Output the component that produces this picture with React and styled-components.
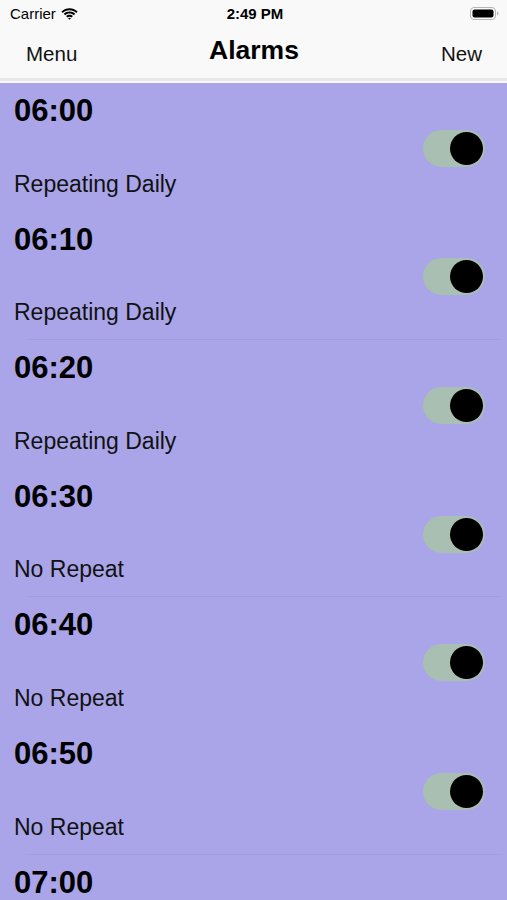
import React, { useState } from 'react';
import styled, { createGlobalStyle } from 'styled-components';

const GlobalStyle = createGlobalStyle`
  html, body {
    margin: 0;
    padding: 0;
    background: #a9a5e8;
    font-family: "Liberation Sans", Arial, sans-serif;
  }
  * { box-sizing: border-box; }
`;

const alarms = [
  { time: '06:00', repeat: 'Repeating Daily', sep: false },
  { time: '06:10', repeat: 'Repeating Daily', sep: true },
  { time: '06:20', repeat: 'Repeating Daily', sep: false },
  { time: '06:30', repeat: 'No Repeat', sep: true },
  { time: '06:40', repeat: 'No Repeat', sep: false },
  { time: '06:50', repeat: 'No Repeat', sep: true },
  { time: '07:00', repeat: 'No Repeat', sep: false },
];

function App() {
  const [on, setOn] = useState(alarms.map(() => true));

  return (
    <Page>
      <GlobalStyle />
      <Header>
        <StatusBar>
          <Carrier>
            Carrier
            <svg width="17" height="12" viewBox="0 0 17 12">
              <path d="M8.5 2.2c2.6 0 5 1 6.8 2.7l1.3-1.4C14.4 1.4 11.6.2 8.5.2S2.6 1.4.4 3.5l1.3 1.4C3.5 3.2 5.9 2.2 8.5 2.2z" fill="#000" />
              <path d="M8.5 5.5c1.7 0 3.2.6 4.4 1.7l1.3-1.4C12.7 4.4 10.7 3.5 8.5 3.5S4.3 4.4 2.8 5.8l1.3 1.4c1.2-1.1 2.7-1.7 4.4-1.7z" fill="#000" />
              <path d="M8.5 8.7c.8 0 1.5.3 2.1.8l1.3-1.4C11 7.3 9.8 6.8 8.5 6.8S6 7.3 5.1 8.1l1.3 1.4c.6-.5 1.3-.8 2.1-.8zM8.5 11.8l1.5-1.6c-.4-.3-.9-.5-1.5-.5s-1.1.2-1.5.5z" fill="#000" />
            </svg>
          </Carrier>
          <Clock>2:49 PM</Clock>
          <Battery>
            <svg width="30" height="13" viewBox="0 0 30 13">
              <rect x="0.5" y="0.5" width="25" height="12" rx="3.5" fill="none" stroke="#b5b5b5" />
              <rect x="2.5" y="2.5" width="21" height="8" rx="2" fill="#000" />
              <path d="M27 4.5v4c.9-.3 1.5-1.1 1.5-2s-.6-1.7-1.5-2z" fill="#b5b5b5" />
            </svg>
          </Battery>
        </StatusBar>
        <NavBar>
          <NavButton>Menu</NavButton>
          <Title>Alarms</Title>
          <NavButton $right>New</NavButton>
        </NavBar>
      </Header>

      <List>
        {alarms.map((a, i) => (
          <Row key={a.time} $sep={a.sep}>
            <Info>
              <Time>{a.time}</Time>
              <Repeat>{a.repeat}</Repeat>
            </Info>
            <Toggle
              $on={on[i]}
              onClick={() => setOn(on.map((v, j) => (j === i ? !v : v)))}
            >
              <Knob />
            </Toggle>
          </Row>
        ))}
      </List>
    </Page>
  );
}

export default App;

const Page = styled.div`
  width: 507px;
  height: 900px;
  overflow: hidden;
`;

const Header = styled.div`
  background: #f9f9f9;
  padding-bottom: 2px;
`;

const StatusBar = styled.div`
  height: 27px;
  display: flex;
  align-items: center;
  justify-content: space-between;
  padding: 0 7px 0 10px;
  font-size: 15px;
  color: #000;
`;

const Carrier = styled.div`
  display: flex;
  align-items: center;
  gap: 5px;
  width: 100px;
`;

const Clock = styled.div`
  font-weight: bold;
  font-size: 15px;
`;

const Battery = styled.div`
  width: 100px;
  display: flex;
  justify-content: flex-end;
`;

const NavBar = styled.div`
  height: 54px;
  display: flex;
  align-items: center;
  justify-content: space-between;
  padding: 2px 25px 0 26px;
  border-bottom: 3px solid #e8e8e8;
`;

const NavButton = styled.div`
  width: 80px;
  font-size: 20.5px;
  color: #111;
  text-align: ${p => (p.$right ? 'right' : 'left')};
`;

const Title = styled.div`
  font-size: 26.5px;
  font-weight: bold;
  color: #000;
  margin-bottom: 6px;
`;

const List = styled.div`
  background: #a9a5e8;
`;

const Row = styled.div`
  height: 128.6px;
  display: flex;
  align-items: center;
  justify-content: space-between;
  padding: 0 22px 0 14px;
  position: relative;
  &::after {
    content: '';
    display: ${p => (p.$sep ? 'block' : 'none')};
    position: absolute;
    left: 27px;
    right: 6px;
    bottom: 0;
    height: 1px;
    background: #a29ddc;
  }
`;

const Info = styled.div`
  height: 100%;
  display: flex;
  flex-direction: column;
  justify-content: space-between;
  padding: 10px 0 14px;
`;

const Time = styled.div`
  font-size: 31px;
  font-weight: bold;
  line-height: 36px;
  color: #000;
`;

const Repeat = styled.div`
  font-size: 23px;
  line-height: 28px;
  color: #111;
`;

const Toggle = styled.div`
  width: 62px;
  height: 37px;
  border-radius: 19px;
  background: ${p => (p.$on ? '#a8bfb2' : '#c9c9d6')};
  display: flex;
  align-items: center;
  justify-content: ${p => (p.$on ? 'flex-end' : 'flex-start')};
  padding: 0 2px;
  margin-top: 2px;
  cursor: pointer;
`;

const Knob = styled.div`
  width: 33px;
  height: 33px;
  border-radius: 50%;
  background: #000;
`;
